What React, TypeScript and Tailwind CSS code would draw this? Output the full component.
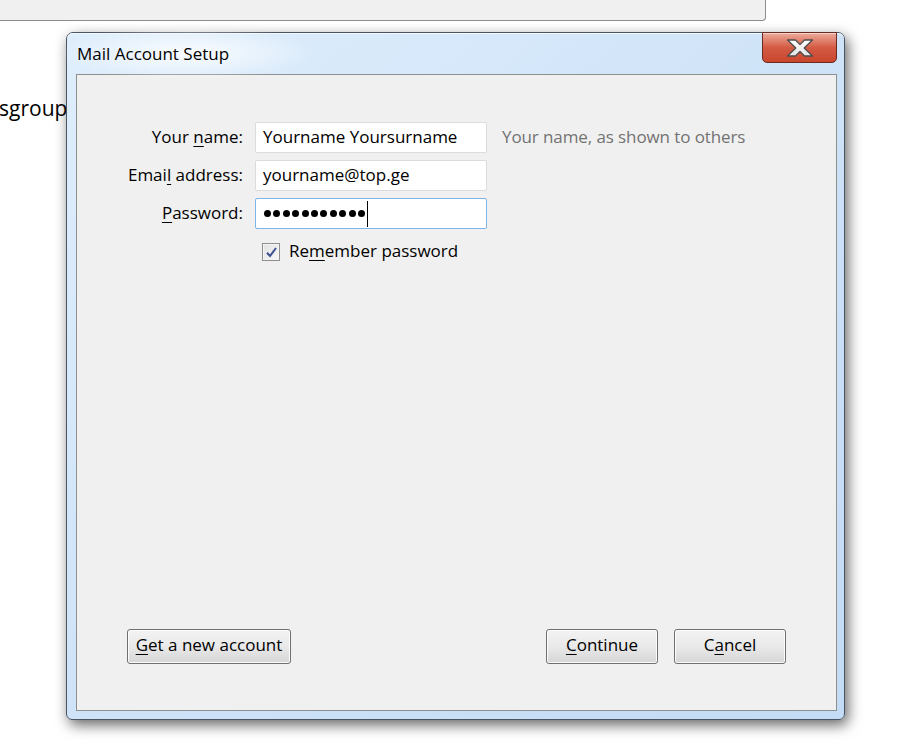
import React from "react";

// Mail Account Setup dialog (Windows 7 Aero look)

const FONT = "font-['Open_Sans','Noto_Sans',sans-serif]";

function CloseGlyph() {
  return (
    <svg width="28" height="18" viewBox="0 0 28 18">
      <defs>
        <linearGradient id="xfill" x1="0" y1="0" x2="0" y2="1">
          <stop offset="0" stopColor="#ffffff" />
          <stop offset="1" stopColor="#e4e4e4" />
        </linearGradient>
      </defs>
      <polygon
        points="1.5,1 9.5,1 14,5.6 18.5,1 26.5,1 18.2,9 26.5,17 18.5,17 14,12.4 9.5,17 1.5,17 9.8,9"
        fill="url(#xfill)"
        stroke="#4d4d4d"
        strokeWidth="1.3"
        strokeLinejoin="round"
      />
    </svg>
  );
}

function WinButton({ children, className = "" }: { children: React.ReactNode; className?: string }) {
  return (
    <button
      className={`h-[35px] pb-[3px] rounded-[3px] border border-[#707070] bg-gradient-to-b from-[#f3f3f3] via-[#e9e9e9] to-[#d6d6d6] text-[17px] text-black shadow-[inset_0_0_0_1px_#fcfcfc] flex items-center justify-center ${className}`}
    >
      {children}
    </button>
  );
}

function Field({ children, focused = false }: { children: React.ReactNode; focused?: boolean }) {
  return (
    <div
      className={`h-[31px] w-[232px] bg-white border flex items-center pl-[7px] pb-[2px] text-[17px] text-black rounded-[2px] ${
        focused ? "border-[#7eb4ea]" : "border-[#dcdcdc]"
      }`}
    >
      {children}
    </div>
  );
}

export default function App() {
  const dots = Array.from({ length: 11 });

  return (
    <div className={`relative w-[900px] h-[750px] overflow-hidden bg-white ${FONT}`}>
      {/* Ventana de fondo */}
      <div className="h-[21px] w-[766px] bg-[#f0f0f0] border-b border-r border-[#8c8c8c] rounded-br-[4px]" />
      <div className="mt-[73px] -ml-[1px] text-[21px] leading-[28px] text-black">sgroups</div>

      {/* Dialogo */}
      <div className="absolute left-[66px] top-[32px] w-[779px] h-[688px] flex flex-col rounded-t-[7px] rounded-b-[6px] border border-[#4a5563] bg-gradient-to-br from-[#dfeefc] via-[#cfe3f8] to-[#c3dbf4] shadow-[3px_5px_14px_rgba(0,0,0,0.6)]">
        {/* Barra de titulo */}
        <div className="relative h-[41px] flex items-start justify-between rounded-t-[6px] shadow-[inset_0_1px_0_#f4f9ff]">
          <div className="absolute left-[-10px] top-[-8px] w-[260px] h-[56px] rounded-full bg-[radial-gradient(ellipse_at_center,rgba(255,255,255,0.85),rgba(255,255,255,0)_70%)]" />
          <div className="relative self-center pl-[10px] text-[17px] text-black leading-none">Mail Account Setup</div>
          <div className="relative -mt-[1px] mr-[7px] w-[75px] h-[31px] rounded-b-[5px] border border-[#6b2a20] bg-gradient-to-b from-[#ecaa9c] via-[#d45a43] to-[#c9462d] flex items-center justify-center shadow-[inset_0_1px_0_rgba(255,255,255,0.5)]">
            <CloseGlyph />
          </div>
        </div>

        {/* Panel de contenido */}
        <div className="flex-1 ml-[9px] mr-[7px] mb-[8px] border border-[#8e8f8f] bg-[#f0f0f0] flex flex-col pt-[47px] pb-[46px] text-[17px] text-black">
          <div className="grid grid-cols-[166px_232px_auto] gap-y-[7px] items-center">
            <div className="text-right pb-[2px]">
              Your <u className="underline-offset-[3px]">n</u>ame:
            </div>
            <div className="ml-[12px]">
              <Field>Yourname Yoursurname</Field>
            </div>
            <div className="ml-[27px] pb-[2px] text-[#737373] tracking-[-0.1px]">Your name, as shown to others</div>

            <div className="text-right pb-[2px]">
              Emai<u className="underline-offset-[3px]">l</u> address:
            </div>
            <div className="ml-[12px]">
              <Field>yourname@top.ge</Field>
            </div>
            <div />

            <div className="text-right pb-[2px]">
              <u className="underline-offset-[3px]">P</u>assword:
            </div>
            <div className="ml-[12px]">
              <Field focused>
                <div className="flex items-center gap-[2.4px] ml-[1px] mt-[2px]">
                  {dots.map((_, i) => (
                    <span key={i} className="w-[7px] h-[7px] rounded-full bg-black" />
                  ))}
                </div>
                <span className="ml-[2px] mt-[2px] w-[1px] h-[26px] bg-black" />
              </Field>
            </div>
            <div />
          </div>

          {/* Recordar contrasena */}
          <div className="flex items-center mt-[9px] ml-[185px]">
            <div className="w-[18px] h-[18px] border border-[#8f8f8f] bg-gradient-to-br from-[#e2e2e2] to-[#f7f7f7] flex items-center justify-center shadow-[inset_0_0_0_1px_#f4f4f4]">
              <svg width="13" height="13" viewBox="0 0 13 13">
                <path d="M2 6.8 L5 10 L11 2" fill="none" stroke="#3a4f8f" strokeWidth="2" />
              </svg>
            </div>
            <span className="ml-[9px] pb-[3px]">
              Re<u className="underline-offset-[3px]">m</u>ember password
            </span>
          </div>

          <div className="flex-1" />

          {/* Botones */}
          <div className="flex items-center px-[50px]">
            <WinButton className="w-[164px]">
              <span>
                <u className="underline-offset-[3px]">G</u>et a new account
              </span>
            </WinButton>
            <div className="flex-1" />
            <WinButton className="w-[112px]">
              <span>
                <u className="underline-offset-[3px]">C</u>ontinue
              </span>
            </WinButton>
            <WinButton className="w-[112px] ml-[16px]">
              <span>
                C<u className="underline-offset-[3px]">a</u>ncel
              </span>
            </WinButton>
          </div>
        </div>
      </div>
    </div>
  );
}
